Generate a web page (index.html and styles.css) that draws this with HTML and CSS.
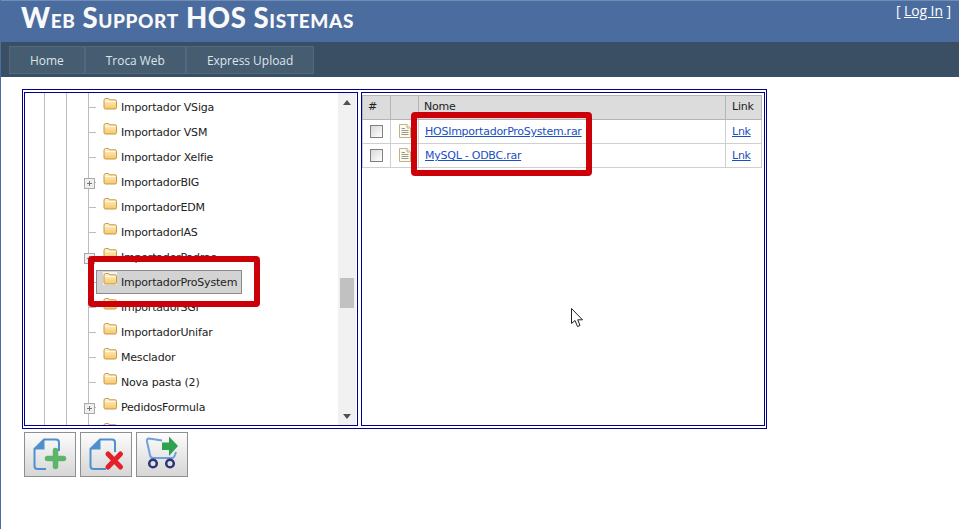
FILE: index.html
```html
<!DOCTYPE html>
<html lang="pt">
<head>
<meta charset="utf-8">
<title>Web Support HOS Sistemas</title>
<link rel="stylesheet" href="styles.css">
</head>
<body>
<svg class="defs" width="0" height="0" aria-hidden="true">
  <defs>
    <linearGradient id="fg" x1="0" y1="0" x2="0" y2="1">
      <stop offset="0" stop-color="#fff3cf"/><stop offset="1" stop-color="#f7c667"/>
    </linearGradient>
    <symbol id="folder" viewBox="0 0 14 13">
      <path d="M1 3.500 Q1 1.500 2.500 1.500 H5 Q6 1.500 6.500 2.800 H12 Q13.500 2.800 13.500 4.200 V10.500 Q13.500 12 12 12 H2.500 Q1 12 1 10.500 Z" fill="url(#fg)" stroke="#c49a4a" stroke-width="1"/>
      <path d="M2 4.500 H12.500" stroke="#fff7df" stroke-width="1"/>
    </symbol>
    <symbol id="doc" viewBox="0 0 12 14">
      <path d="M.5 .5 H8 L11.500 4 V13.500 H.5 Z" fill="#fdfbf0" stroke="#c2b184"/>
      <path d="M8 .5 V4 H11.500" fill="#f3ecd2" stroke="#c2b184"/>
      <path d="M2.500 4.500 H6 M2.500 6.500 H9.500 M2.500 8.500 H9.500 M2.500 10.500 H9.500" stroke="#9a9a88"/>
    </symbol>
  </defs>
</svg>
<div class="page">
  <header class="masthead">
    <div class="title-row">
      <h1 class="title">Web Support HOS Sistemas</h1>
      <div class="login">[ <a href="#">Log In</a> ]</div>
    </div>
    <nav class="menu">
      <a class="menu-item" href="#">Home</a>
      <a class="menu-item" href="#">Troca Web</a>
      <a class="menu-item" href="#">Express Upload</a>
    </nav>
  </header>
  <main class="main">
    <div class="explorer">
      <section class="tree-pane">
        <ul class="tree">
          <li class="row"><span class="node"><svg class="folder"><use href="#folder"/></svg><span>Importador VSiga</span></span></li>
          <li class="row"><span class="node"><svg class="folder"><use href="#folder"/></svg><span>Importador VSM</span></span></li>
          <li class="row"><span class="node"><svg class="folder"><use href="#folder"/></svg><span>Importador Xelfie</span></span></li>
          <li class="row expandable"><span class="node"><svg class="folder"><use href="#folder"/></svg><span>ImportadorBIG</span></span></li>
          <li class="row"><span class="node"><svg class="folder"><use href="#folder"/></svg><span>ImportadorEDM</span></span></li>
          <li class="row"><span class="node"><svg class="folder"><use href="#folder"/></svg><span>ImportadorIAS</span></span></li>
          <li class="row expandable"><span class="node"><svg class="folder"><use href="#folder"/></svg><span>ImportadorPadrao</span></span></li>
          <li class="row"><span class="node selected"><svg class="folder"><use href="#folder"/></svg><span>ImportadorProSystem</span></span></li>
          <li class="row"><span class="node"><svg class="folder"><use href="#folder"/></svg><span>ImportadorSGI</span></span></li>
          <li class="row"><span class="node"><svg class="folder"><use href="#folder"/></svg><span>ImportadorUnifar</span></span></li>
          <li class="row"><span class="node"><svg class="folder"><use href="#folder"/></svg><span>Mesclador</span></span></li>
          <li class="row"><span class="node"><svg class="folder"><use href="#folder"/></svg><span>Nova pasta (2)</span></span></li>
          <li class="row expandable"><span class="node"><svg class="folder"><use href="#folder"/></svg><span>PedidosFormula</span></span></li>
          <li class="row"><span class="node"><svg class="folder"><use href="#folder"/></svg></span></li>
        </ul>
        <div class="scrollbar">
          <span class="arrow up"></span>
          <span class="thumb"></span>
          <span class="arrow down"></span>
        </div>
      </section>
      <section class="list-pane">
        <table class="files">
          <thead>
            <tr><th class="c-check">#</th><th class="c-icon"></th><th class="c-name">Nome</th><th class="c-link">Link</th></tr>
          </thead>
          <tbody>
            <tr>
              <td class="c-check"><span class="checkbox"></span></td>
              <td class="c-icon"><svg class="doc"><use href="#doc"/></svg></td>
              <td class="c-name"><a href="#">HOSImportadorProSystem.rar</a></td>
              <td class="c-link"><a href="#">Lnk</a></td>
            </tr>
            <tr>
              <td class="c-check"><span class="checkbox"></span></td>
              <td class="c-icon"><svg class="doc"><use href="#doc"/></svg></td>
              <td class="c-name"><a href="#">MySQL - ODBC.rar</a></td>
              <td class="c-link"><a href="#">Lnk</a></td>
            </tr>
          </tbody>
        </table>
      </section>
      <div class="mark mark-tree"></div>
      <div class="mark mark-list"></div>
    </div>
    <div class="actions">
      <button class="action" type="button" aria-label="Adicionar">
        <svg viewBox="1 1 50 43" width="50" height="43">
          <path d="M35 19 V10.500 Q35 7.500 32 7.500 H20 L10.500 17 V34 Q10.500 37 13.500 37 H22" fill="none" stroke="#4f8fcb" stroke-width="2"/>
          <path d="M10 17.500 H20.500 V7 Z" fill="#4f8fcb"/>
          <path d="M31.500 18.500 V34.500 M23.500 26.500 H39.500" stroke="#5cb56a" stroke-width="5.500" stroke-linecap="round"/>
        </svg>
      </button>
      <button class="action" type="button" aria-label="Remover">
        <svg viewBox="1 1 50 43" width="50" height="43">
          <path d="M35 20 V10.500 Q35 7.500 32 7.500 H20 L10.500 17 V34 Q10.500 37 13.500 37 H26" fill="none" stroke="#4f8fcb" stroke-width="2"/>
          <path d="M10 17.500 H20.500 V7 Z" fill="#4f8fcb"/>
          <path d="M28 22 L40.500 35 M40.500 22 L28 35" stroke="#e3202a" stroke-width="5" stroke-linecap="round"/>
        </svg>
      </button>
      <button class="action" type="button" aria-label="Enviar">
        <svg viewBox="1 1 50 43" width="50" height="43">
          <path d="M26 8.500 L13 6.500 Q10.500 6.500 11 9.500 L14 23 Q14.500 26 17 26 H36 Q38 26 39 23 L40 20" fill="none" stroke="#6fa0d8" stroke-width="2"/>
          <path d="M26 10.500 H33 V4.500 L42 14 L33 24 V18 H26 Z" fill="#2fa24f"/>
          <circle cx="17" cy="31.500" r="3.800" fill="none" stroke="#2b3578" stroke-width="2.500"/>
          <circle cx="34" cy="31.500" r="3.800" fill="none" stroke="#2b3578" stroke-width="2.500"/>
        </svg>
      </button>
    </div>
  </main>
  <svg class="cursor" width="14" height="21" viewBox="0 0 14 21" aria-hidden="true">
    <path d="M.5 .5 V15.500 L4 12.500 L6.500 18.500 L9 17.500 L6.700 11.800 H11.500 Z" fill="#fff" stroke="#222" stroke-width="1"/>
  </svg>
</div>
</body>
</html>
```
FILE: styles.css
```css
* { box-sizing: border-box; }
html, body { margin: 0; height: 100%; }
body { background: #fff; font-family: "DejaVu Sans", Verdana, sans-serif; font-size: 11px; letter-spacing: -.2px; color: #222; overflow: hidden; }
.defs { position: absolute; }

.page { position: relative; height: 100%; border-left: 1px solid #4b6c9e; }

.masthead { background: #4b6c9e; }
.title-row { height: 42px; display: flex; justify-content: space-between; align-items: flex-start; border-top: 1px solid #6f8db5; }
.title { margin: 0; padding: 0 0 0 20px; font-family: Lato, sans-serif; font-size: 27.500px; letter-spacing: .6px; line-height: 33px; font-weight: 900; font-variant: small-caps; color: #f9f9f9; white-space: nowrap; }
.login { padding: 1px 8px 0 0; font-family: "Open Sans", sans-serif; font-size: 13.800px; letter-spacing: 0; line-height: 18px; color: #fff; }
.login a { color: #fff; }

.menu { height: 35px; background: #3a4f63; display: flex; padding: 4px 0 3px 8px; }
.menu-item { display: flex; align-items: center; padding: 0 20px; background: #465c71; border: 1px solid #4b6c7e; border-left-color: #4f6780; font-family: "Open Sans", sans-serif; font-size: 11.950px; letter-spacing: 0; color: #dde4ec; text-decoration: none; }

.main { padding: 12px 0 0 21px; }

.explorer { position: relative; width: 745px; height: 340px; border: 1px solid #00008b; padding: 2px 2px 2px 1px; display: flex; }

.tree-pane { flex: none; width: 334px; border: 1px solid #00008b; display: flex; overflow: hidden; }
.tree { flex: 1; margin: 0; padding: 2px 0 0; list-style: none; overflow: hidden;
  background:
    linear-gradient(#bdbdbd, #bdbdbd) 19px 0 / 1px 100% no-repeat,
    linear-gradient(#bdbdbd, #bdbdbd) 41px 0 / 1px 100% no-repeat,
    linear-gradient(#bdbdbd, #bdbdbd) 63px 0 / 1px 100% no-repeat;
}
.row { position: relative; height: 25px; padding-left: 71px; }
.row::before { content: ""; position: absolute; left: 63px; top: 12px; width: 8px; height: 1px; background: #bdbdbd; }
.expandable::after { content: ""; position: absolute; left: 59px; top: 8px; width: 9px; height: 9px; border: 1px solid #a8a8a8; background: linear-gradient(#777, #777) center / 5px 1px no-repeat, linear-gradient(#777, #777) center / 1px 5px no-repeat, #efefef; }
.node { position: relative; display: inline-flex; align-items: center; height: 24px; padding: 0 4px 0 6px; border: 1px solid transparent; color: #222; white-space: nowrap; background: #fff; }
.node.selected { background: #d3d3d3; border-color: #8a8a8a; }
.folder { width: 14px; height: 13px; margin: -8px 4px 0 0; flex: none; }
.selected .folder { background: #f4f4f4; }

.scrollbar { flex: none; width: 18px; margin-right: 1px; background: #f1f1f1; display: flex; flex-direction: column; align-items: center; }
.arrow { width: 0; height: 0; border-left: 4px solid transparent; border-right: 4px solid transparent; flex: none; }
.arrow.up { border-bottom: 5px solid #505050; margin-top: 7px; }
.arrow.down { border-top: 5px solid #505050; margin-bottom: 6px; }
.thumb { width: 14px; height: 30px; background: #c1c1c1; margin: 173px 0 auto; }

.list-pane { flex: none; width: 404px; margin-left: 3px; border: 1px solid #00008b; padding: 2px 0 0 0; }
.files { width: 400px; border-collapse: collapse; table-layout: fixed; border: 1px solid #a8a8a8; }
.files th { height: 24px; background: #dcdcdc; border: 1px solid #b5b5b5; font-weight: 400; text-align: left; padding: 0 5px 2px; color: #222; }
.files td { height: 24px; border: 1px solid #cfcfcf; padding: 0 6px; }
.files a { color: #1a4fbf; letter-spacing: -.25px; }
.c-check { width: 28px; }
.c-icon { width: 28px; }
.c-link { width: 36px; }
.files .c-link { padding-left: 6px; }
.checkbox { display: block; width: 13px; height: 13px; margin: 0 auto; border: 1px solid #808080; background: linear-gradient(135deg, #d8d8d8, #fff); }
.doc { display: block; width: 12px; height: 14px; margin: -2px 0 0 2px; }

.mark { position: absolute; border: 6px solid #cc0008; border-radius: 4px; pointer-events: none; }
.mark-tree { left: 65px; top: 166px; width: 172px; height: 51px; }
.mark-list { left: 388px; top: 22px; width: 181px; height: 64px; }

.actions { display: flex; gap: 4px; margin: 3px 0 0 2px; }
.action { width: 52px; height: 45px; padding: 0; border: 1px solid #8f8f8f; background: linear-gradient(#fcfcfc, #d6d6d6); display: flex; align-items: center; justify-content: center; }

.cursor { position: absolute; left: 570px; top: 308px; }
```
